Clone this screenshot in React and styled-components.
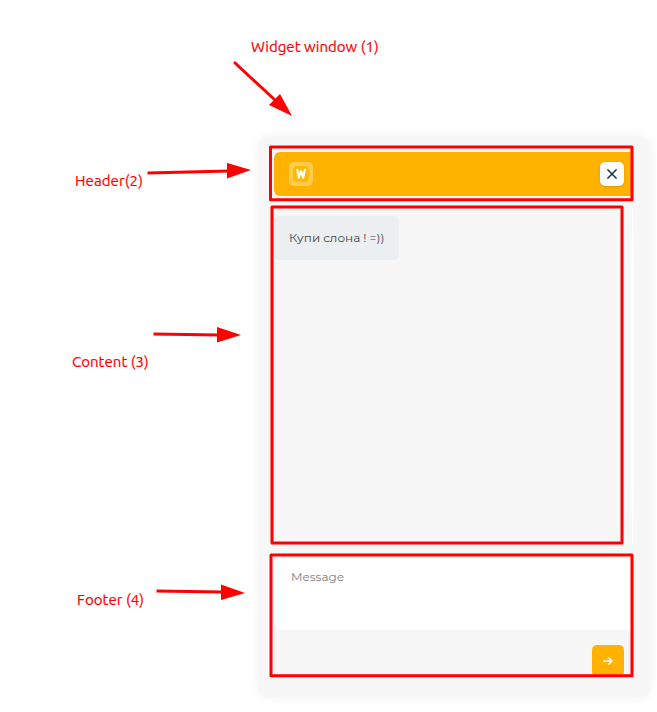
import React from "react";
import styled, { createGlobalStyle } from "styled-components";

const GlobalStyle = createGlobalStyle`
  * { box-sizing: border-box; }
  body { margin: 0; background: #fff; overflow: hidden; }
`;

const Page = styled.main`
  position: relative;
  width: 657px;
  height: 712px;
  padding: 137px 7px 15px 259px;
  overflow: hidden;
  background: #fff;
`;

const Widget = styled.section`
  display: flex;
  flex-direction: column;
  height: 560px;
  padding: 15px 17px 20px 15px;
  border-radius: 8px;
  background: #f7f7f7;
  box-shadow: 0 0 12px rgba(0, 0, 0, 0.06);
  font-family: "Montserrat", "Inter", sans-serif;
`;

const Header = styled.header`
  display: flex;
  flex: none;
  align-items: center;
  justify-content: space-between;
  height: 44px;
  padding: 0 9px 0 15px;
  border-radius: 6px 0 0 6px;
  background: #ffb200;
`;

const Logo = styled.div`
  display: grid;
  place-items: center;
  width: 24px;
  height: 24px;
  border-radius: 5px;
  background: #ffcc4d;
`;

const LogoCore = styled.div`
  display: grid;
  place-items: center;
  width: 16px;
  height: 16px;
  border-radius: 4px;
  background: #ffb900;
`;

const IconButton = styled.button`
  display: grid;
  place-items: center;
  width: 24px;
  height: 24px;
  padding: 0;
  border: 0;
  border-radius: 5px;
  background: #fff;
  box-shadow: 0 1px 3px rgba(70, 50, 0, 0.18);
`;

const Content = styled.div`
  display: flex;
  flex: none;
  justify-content: space-between;
  align-items: flex-start;
  height: 342px;
  margin-top: 10px;
`;

const Bubble = styled.p`
  display: flex;
  align-items: center;
  width: 125px;
  height: 44px;
  margin: 10px 0 0;
  padding: 0 0 2px 15px;
  border-radius: 5px;
  background: #ebeff2;
  color: #424242;
  font-size: 12px;
  white-space: nowrap;
`;

const ScrollTrack = styled.div`
  width: 3px;
  height: 342px;
  margin-right: -1px;
  border-radius: 50%;
  background: #fff;
`;

const Footer = styled.footer`
  display: flex;
  flex: none;
  flex-direction: column;
  height: 119px;
  margin-top: 10px;
`;

const MessageField = styled.textarea`
  display: block;
  flex: none;
  width: 100%;
  height: 72px;
  padding: 11px 17px;
  border: 0;
  border-radius: 5px 0 0 5px;
  outline: 0;
  resize: none;
  background: #fff;
  box-shadow: 0 0 1px rgba(0, 0, 0, 0.15);
  font: 12px/15px "Montserrat", "Inter", sans-serif;
  &::placeholder { color: #808080; opacity: 1; }
`;

const SendButton = styled.button`
  display: grid;
  flex: none;
  place-items: center;
  align-self: flex-end;
  width: 32px;
  height: 32px;
  margin: 15px 9px 0 0;
  padding: 0;
  border: 0;
  border-radius: 5px;
  background: #ffb200;
`;

const Annotations = styled.svg`
  position: absolute;
  inset: 0;
  pointer-events: none;
`;

const Label = styled.span`
  position: absolute;
  left: ${(p) => p.$x}px;
  top: ${(p) => p.$y}px;
  color: #f00;
  font: 15px/20px "Ubuntu", "Noto Sans", sans-serif;
  letter-spacing: ${(p) => p.$tracking || 0.03}px;
  -webkit-text-stroke: 0.2px #f00;
  white-space: nowrap;
`;

const labels = [
  { text: "Widget window (1)", x: 251, y: 37 },
  { text: "Header(2)", x: 75, y: 171, tracking: 0.1 },
  { text: "Content (3)", x: 72, y: 352 },
  { text: "Footer (4)", x: 77, y: 590 },
];

const arrows = [
  { line: "M234 62 276 101", head: "269,105 280,94 292,116" },
  { line: "M147.5 173 229 171", head: "227,163 227,178.5 251,170" },
  { line: "M153.5 334 219 335", head: "217,327 217,342.5 241,335" },
  { line: "M156.5 591 223 592", head: "221,584.5 221,600 245,593" },
];

const frames = [
  { x: 270.5, y: 147, width: 361.5, height: 52.7 },
  { x: 272, y: 207, width: 350, height: 336 },
  { x: 271, y: 555, width: 361, height: 120.7 },
];

export default function App() {
  return (
    <Page>
      <GlobalStyle />
      <Widget>
        <Header>
          <Logo>
            <LogoCore>
              <svg width="10" height="10" viewBox="0 0 10 10" fill="none" stroke="#fff" strokeWidth="2.1" strokeLinejoin="round">
                <path d="M1 0 2.8 8.7 5 2 7.2 8.7 9 0" />
              </svg>
            </LogoCore>
          </Logo>
          <IconButton aria-label="Close">
            <svg width="10" height="10" viewBox="0 0 10 10" stroke="#12304a" strokeWidth="1.5">
              <path d="M0.4 0.4 9.6 9.6M9.6 0.4 0.4 9.6" />
            </svg>
          </IconButton>
        </Header>
        <Content>
          <Bubble>Купи слона ! =))</Bubble>
          <ScrollTrack />
        </Content>
        <Footer>
          <MessageField placeholder="Message" />
          <SendButton aria-label="Send">
            <svg width="10" height="8" viewBox="0 0 10 8" fill="none" stroke="#fff" strokeWidth="1.6" strokeLinecap="round" strokeLinejoin="round">
              <path d="M0.8 4H9M6 1 9 4 6 7" />
            </svg>
          </SendButton>
        </Footer>
      </Widget>
      <Annotations width="657" height="712" viewBox="0 0 657 712">
        {frames.map((frame) => (
          <rect key={frame.y} {...frame} fill="none" stroke="#f00" strokeWidth="3" strokeLinejoin="round" />
        ))}
        {arrows.map(({ line, head }) => (
          <g key={head}>
            <path d={line} stroke="#f00" strokeWidth="3" />
            <polygon points={head} fill="#f00" />
          </g>
        ))}
      </Annotations>
      {labels.map(({ text, x, y, tracking }) => (
        <Label key={text} $x={x} $y={y} $tracking={tracking}>{text}</Label>
      ))}
    </Page>
  );
}
